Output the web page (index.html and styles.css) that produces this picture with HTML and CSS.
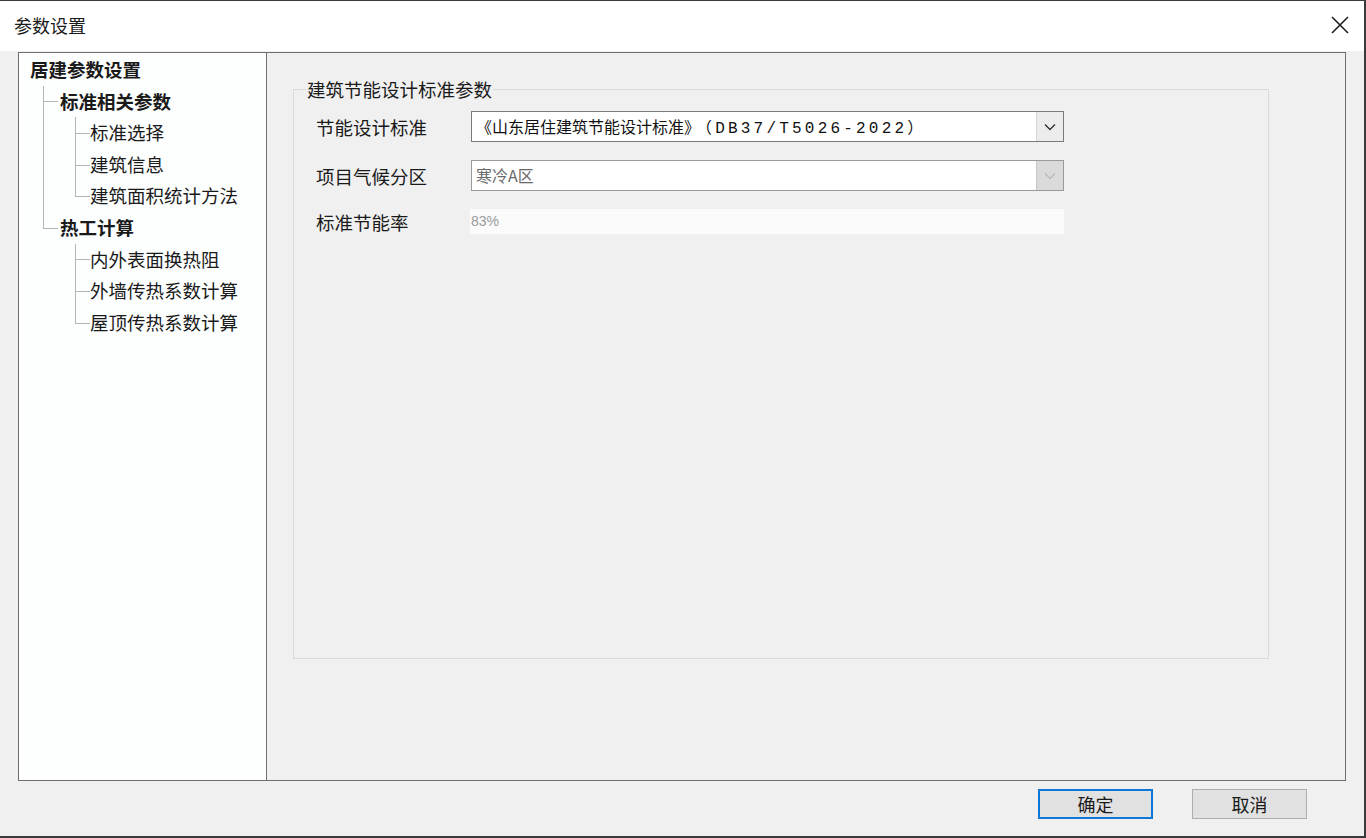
FILE: index.html
```html
<!DOCTYPE html>
<html lang="zh-CN">
<head>
<meta charset="utf-8">
<title>参数设置</title>
<link rel="stylesheet" href="styles.css">
</head>
<body>
<div class="window">
  <div class="titlebar">
    <span class="title">参数设置</span>
    <span class="close">
      <svg width="18" height="18" viewBox="0 0 18 18"><path d="M1 1 L17 17 M17 1 L1 17" stroke="#1e1e1e" stroke-width="1.6" fill="none"/></svg>
    </span>
  </div>
  <div class="content">
    <div class="panel">
      <div class="tree">
        <div class="node root">居建参数设置</div>
        <ul class="lvl1">
          <li><div class="node bold">标准相关参数</div>
            <ul class="lvl2">
              <li><div class="node">标准选择</div></li>
              <li><div class="node">建筑信息</div></li>
              <li><div class="node">建筑面积统计方法</div></li>
            </ul>
          </li>
          <li><div class="node bold">热工计算</div>
            <ul class="lvl2">
              <li><div class="node">内外表面换热阻</div></li>
              <li><div class="node">外墙传热系数计算</div></li>
              <li><div class="node">屋顶传热系数计算</div></li>
            </ul>
          </li>
        </ul>
      </div>
      <div class="main">
        <fieldset class="group">
          <legend>建筑节能设计标准参数</legend>
          <div class="rows">
            <div class="row">
              <label class="label">节能设计标准</label>
              <div class="combo">
                <span class="combo-text">《山东居住建筑节能设计标准》<span class="code">（DB37/T5026-2022）</span></span>
                <span class="combo-btn">
                  <svg width="12" height="8" viewBox="0 0 12 8"><path d="M1 1.5 L6 6.5 L11 1.5" stroke="#333" stroke-width="1.4" fill="none"/></svg>
                </span>
              </div>
            </div>
            <div class="row">
              <label class="label">项目气候分区</label>
              <div class="combo disabled">
                <span class="combo-text">寒冷A区</span>
                <span class="combo-btn">
                  <svg width="12" height="8" viewBox="0 0 12 8"><path d="M1 1.5 L6 6.5 L11 1.5" stroke="#b8b8b8" stroke-width="1.2" fill="none"/></svg>
                </span>
              </div>
            </div>
            <div class="row short">
              <label class="label">标准节能率</label>
              <div class="textfield">83%</div>
            </div>
          </div>
        </fieldset>
      </div>
    </div>
    <div class="footer">
      <button class="btn primary">确定</button>
      <button class="btn">取消</button>
    </div>
  </div>
</div>
</body>
</html>
```
FILE: styles.css
```css
* { box-sizing: border-box; }
html, body { margin: 0; padding: 0; }
body {
  width: 1366px;
  height: 838px;
  font-family: "Noto Sans CJK SC", "Noto Sans", sans-serif;
  color: #1a1a1a;
  background: #f0f0f0;
  overflow: hidden;
}
.window {
  width: 1366px;
  height: 838px;
  display: flex;
  flex-direction: column;
  border-top: 1px solid #3a3a3a;
  border-right: 2px solid #3a3a3a;
  border-bottom: 2px solid #3a3a3a;
}
.titlebar {
  height: 50px;
  background: #ffffff;
  display: flex;
  align-items: center;
  justify-content: space-between;
  padding: 0 15px 2px 14px;
}
.title {
  font-size: 18px;
  line-height: 22px;
}
.close { display: flex; }
.content {
  flex: 1;
  background: #f0f0f0;
  display: flex;
  flex-direction: column;
  padding: 1px 18px 0 18px;
}
.panel {
  height: 729px;
  display: flex;
  border: 1px solid #6f6f6f;
}
.tree {
  width: 248px;
  background: #fdfefe;
  border-right: 1px solid #6f6f6f;
  padding: 1px 0 0 11px;
  font-size: 18.5px;
}
.node {
  height: 31.6px;
  line-height: 31.6px;
  white-space: nowrap;
}
.root, .bold { font-weight: 700; }
.tree ul { list-style: none; margin: 0; padding: 0; }
.tree .lvl1 { margin-left: 13px; }
.tree .lvl2 { margin-left: 15px; }
.tree li { position: relative; }
.tree .lvl1 > li { padding-left: 17px; }
.tree .lvl2 > li { padding-left: 15px; }
.tree li::before {
  content: "";
  position: absolute;
  left: 0;
  top: 0;
  height: 15.8px;
  width: 14px;
  border-left: 1px solid #b4b4b4;
  border-bottom: 1px solid #b4b4b4;
}
.tree li:not(:last-child)::after {
  content: "";
  position: absolute;
  left: 0;
  top: 0;
  bottom: 0;
  border-left: 1px solid #b4b4b4;
}
.main {
  flex: 1;
  background: #f0f0f0;
  padding: 25px 0 0 26px;
}
.group {
  margin: 0;
  width: 976px;
  height: 581px;
  border: 1px solid #dadada;
  padding: 0 0 0 12px;
}
.group legend {
  font-size: 18.5px;
  line-height: 22px;
  padding: 0 1px;
}
.rows {
  margin-top: 11px;
  margin-left: 10px;
  display: flex;
  flex-direction: column;
  gap: 18px;
}
.row {
  display: flex;
  align-items: center;
  height: 31px;
}
.row.short { height: 25px; }
.label {
  width: 155px;
  font-size: 18.5px;
  line-height: 22px;
  flex: none;
}
.combo {
  width: 593px;
  height: 31px;
  background: #ffffff;
  border: 1px solid #7a7a7a;
  display: flex;
  align-items: stretch;
}
.combo-text {
  flex: 1;
  padding-left: 4px;
  font-size: 16px;
  line-height: 29px;
  color: #111;
  white-space: nowrap;
  overflow: hidden;
}
.code {
  font-family: "Liberation Mono", "Noto Sans CJK SC", monospace;
  letter-spacing: 3.2px;
  padding-left: 4px;
}
.combo-btn {
  width: 27px;
  background: #ececec;
  border-left: 1px solid #d6d6d6;
  display: flex;
  align-items: center;
  justify-content: center;
}
.combo.disabled { border-color: #9a9a9a; }
.combo.disabled .combo-text { color: #6a6a6a; padding-left: 4px; }
.combo.disabled .combo-btn { background: #dadada; border-left-color: #c6c6c6; }
.textfield {
  width: 594px;
  height: 25px;
  margin-left: -1px;
  background: #fbfbfb;
  font-size: 14px;
  line-height: 25px;
  color: #9a9a9a;
  padding-left: 1px;
  font-family: "Liberation Sans", sans-serif;
}
.footer {
  flex: 1;
  display: flex;
  justify-content: flex-end;
  align-items: flex-start;
  gap: 39px;
  padding: 8px 39px 0 0;
}
.btn {
  width: 115px;
  height: 30px;
  background: #e1e1e1;
  border: 1px solid #adadad;
  font-family: "Noto Sans CJK SC", sans-serif;
  font-size: 18px;
  line-height: 26px;
  color: #1a1a1a;
  padding: 0;
}
.btn.primary {
  border: 2px solid #0a78d4;
}
```
